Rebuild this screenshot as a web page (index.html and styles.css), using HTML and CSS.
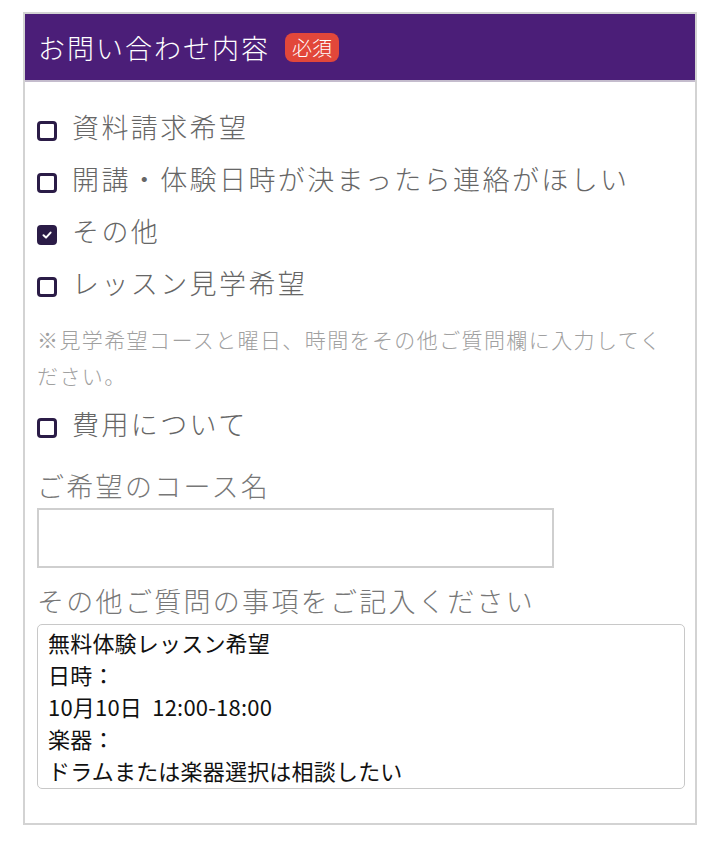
FILE: index.html
```html
<!DOCTYPE html>
<html lang="ja">
<head>
<meta charset="utf-8">
<link rel="stylesheet" href="styles.css">
</head>
<body>
<div class="card">
  <div class="card-head">
    <span class="title">お問い合わせ内容</span>
    <span class="badge">必須</span>
  </div>
  <div class="card-body">
    <label class="row"><span class="box"></span><span class="txt">資料請求希望</span></label>
    <label class="row"><span class="box"></span><span class="txt">開講・体験日時が決まったら連絡がほしい</span></label>
    <label class="row"><span class="box checked"><svg viewBox="0 0 12 12" width="12" height="12"><path d="M2.5 6.3 L5 8.6 L9.6 3.6" fill="none" stroke="#fff" stroke-width="2" stroke-linecap="round" stroke-linejoin="round"/></svg></span><span class="txt">その他</span></label>
    <label class="row"><span class="box"></span><span class="txt">レッスン見学希望</span></label>
    <p class="note">※見学希望コースと曜日、時間をその他ご質問欄に入力してください。</p>
    <label class="row"><span class="box"></span><span class="txt">費用について</span></label>
    <div class="field-label">ご希望のコース名</div>
    <div class="input"></div>
    <div class="field-label second">その他ご質問の事項をご記入ください</div>
    <div class="textarea">無料体験レッスン希望<br>日時：<br>10月10日&nbsp; 12:00-18:00<br>楽器：<br>ドラムまたは楽器選択は相談したい</div>
  </div>
</div>
</body>
</html>
```
FILE: styles.css
```css
html, body {
  margin: 0;
  padding: 0;
  background: #fff;
  font-family: "Noto Sans CJK JP", "Noto Sans", sans-serif;
}
.card {
  margin: 12px 0 0 23px;
  width: 670px;
  border: 2px solid #d3d3d3;
}
.card-head {
  background: #4b1e78;
  height: 66px;
  border-bottom: 2px solid #c4bccd;
  display: flex;
  align-items: center;
  padding-left: 13px;
  gap: 15px;
}
.title {
  color: #fff;
  font-size: 27px;
  font-weight: 300;
  letter-spacing: 2px;
  line-height: 1;
}
.badge {
  background: #e2473a;
  color: #fff;
  font-size: 20px;
  font-weight: 300;
  line-height: 29px;
  height: 29px;
  padding: 0 7px;
  border-radius: 8px;
}
.card-body {
  padding: 18px 12px 34px 12px;
}
.row {
  display: flex;
  align-items: center;
  height: 52px;
  gap: 15px;
}
.box {
  width: 14px;
  height: 14px;
  border: 3px solid #2b1c47;
  border-radius: 4px;
  margin-top: 10px;
  flex: none;
  display: flex;
  align-items: center;
  justify-content: center;
}
.box.checked {
  background: #2b1c47;
}
.txt {
  color: #666;
  font-size: 27px;
  font-weight: 300;
  letter-spacing: 2.4px;
  line-height: 1;
}
.note {
  margin: 13px 0 4px 0;
  color: #a0a0a0;
  font-size: 21px;
  font-weight: 300;
  line-height: 36px;
  letter-spacing: 1.4px;
}
.field-label {
  color: #777;
  font-size: 27px;
  font-weight: 300;
  letter-spacing: 2.3px;
  line-height: 40px;
  margin-top: 17px;
}
.field-label.second {
  margin-top: 13px;
}
.input {
  margin-top: 2px;
  width: 513px;
  height: 56px;
  border: 2px solid #cfcfcf;
}
.textarea {
  margin-top: 3px;
  width: 626px;
  height: 162px;
  border: 1.5px solid #c8c8c8;
  border-radius: 5px;
  padding: 1px 10px 0 10px;
  color: #111;
  font-size: 22px;
  line-height: 32px;
  letter-spacing: 0.2px;
}
```
